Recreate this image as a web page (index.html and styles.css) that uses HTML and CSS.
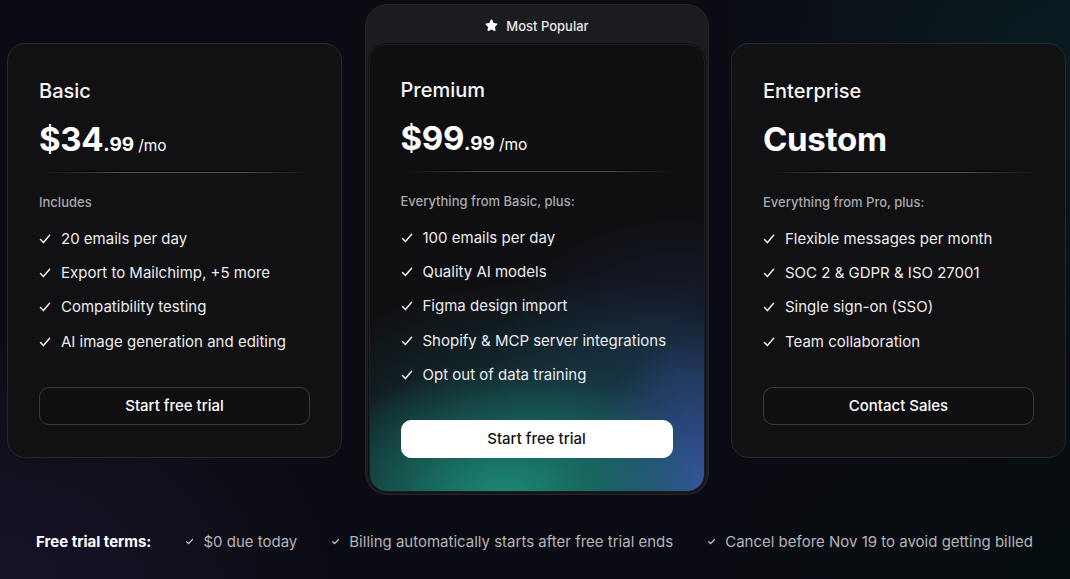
FILE: index.html
```html
<!DOCTYPE html>
<html lang="en">
<head>
<meta charset="utf-8">
<title>Pricing</title>
<link rel="stylesheet" href="styles.css">
</head>
<body>
<main class="page">
  <section class="plans">
    <article class="card">
      <h2 class="plan-name">Basic</h2>
      <div class="price"><span class="amount">$34</span><span class="cents">.99</span><span class="period">/mo</span></div>
      <div class="divider"></div>
      <p class="includes">Includes</p>
      <ul class="features">
        <li><svg class="check" viewBox="0 0 12 12"><path d="M1.5 6.6 L4.4 9.6 L10.6 2.2"/></svg>20 emails per day</li>
        <li><svg class="check" viewBox="0 0 12 12"><path d="M1.5 6.6 L4.4 9.6 L10.6 2.2"/></svg>Export to Mailchimp, +5 more</li>
        <li><svg class="check" viewBox="0 0 12 12"><path d="M1.5 6.6 L4.4 9.6 L10.6 2.2"/></svg>Compatibility testing</li>
        <li><svg class="check" viewBox="0 0 12 12"><path d="M1.5 6.6 L4.4 9.6 L10.6 2.2"/></svg>AI image generation and editing</li>
      </ul>
      <button class="btn">Start free trial</button>
    </article>

    <div class="popular">
      <div class="popular-head">
        <svg class="star" viewBox="0 0 24 24"><path d="M12 2.2c.5 0 .9.3 1.1.7l2.4 4.9 5.3.8c.9.1 1.3 1.3.6 1.9l-3.900 3.8.9 5.4c.2.9-.8 1.6-1.6 1.2L12 18.4l-4.8 2.5c-.8.4-1.8-.3-1.6-1.2l.9-5.4-3.9-3.8c-.7-.6-.3-1.8.6-1.9l5.3-.8 2.4-4.9c.2-.4.6-.7 1.1-.7z"/></svg>
        <span>Most Popular</span>
      </div>
      <article class="card card-premium">
        <h2 class="plan-name">Premium</h2>
        <div class="price"><span class="amount">$99</span><span class="cents">.99</span><span class="period">/mo</span></div>
        <div class="divider"></div>
        <p class="includes">Everything from Basic, plus:</p>
        <ul class="features">
          <li><svg class="check" viewBox="0 0 12 12"><path d="M1.5 6.6 L4.4 9.6 L10.6 2.2"/></svg>100 emails per day</li>
          <li><svg class="check" viewBox="0 0 12 12"><path d="M1.5 6.6 L4.4 9.6 L10.6 2.2"/></svg>Quality AI models</li>
          <li><svg class="check" viewBox="0 0 12 12"><path d="M1.5 6.6 L4.4 9.6 L10.6 2.2"/></svg>Figma design import</li>
          <li><svg class="check" viewBox="0 0 12 12"><path d="M1.5 6.6 L4.4 9.6 L10.6 2.2"/></svg>Shopify &amp; MCP server integrations</li>
          <li><svg class="check" viewBox="0 0 12 12"><path d="M1.5 6.6 L4.4 9.6 L10.6 2.2"/></svg>Opt out of data training</li>
        </ul>
        <button class="btn btn-primary">Start free trial</button>
      </article>
    </div>

    <article class="card">
      <h2 class="plan-name">Enterprise</h2>
      <div class="price"><span class="amount">Custom</span></div>
      <div class="divider"></div>
      <p class="includes">Everything from Pro, plus:</p>
      <ul class="features">
        <li><svg class="check" viewBox="0 0 12 12"><path d="M1.5 6.6 L4.4 9.6 L10.6 2.2"/></svg>Flexible messages per month</li>
        <li><svg class="check" viewBox="0 0 12 12"><path d="M1.5 6.6 L4.4 9.6 L10.6 2.2"/></svg>SOC 2 &amp; GDPR &amp; ISO 27001</li>
        <li><svg class="check" viewBox="0 0 12 12"><path d="M1.5 6.6 L4.4 9.6 L10.6 2.2"/></svg>Single sign-on (SSO)</li>
        <li><svg class="check" viewBox="0 0 12 12"><path d="M1.5 6.6 L4.4 9.6 L10.6 2.2"/></svg>Team collaboration</li>
      </ul>
      <button class="btn">Contact Sales</button>
    </article>
  </section>

  <footer class="terms">
    <strong class="terms-title">Free trial terms:</strong>
    <span class="term"><svg class="mini-check" viewBox="0 0 10 10"><path d="M1.8 5.2 L4 7.3 L8.3 2.8"/></svg>$0 due today</span>
    <span class="term"><svg class="mini-check" viewBox="0 0 10 10"><path d="M1.8 5.2 L4 7.3 L8.3 2.8"/></svg>Billing automatically starts after free trial ends</span>
    <span class="term"><svg class="mini-check" viewBox="0 0 10 10"><path d="M1.8 5.2 L4 7.3 L8.3 2.8"/></svg>Cancel before Nov 19 to avoid getting billed</span>
  </footer>
</main>
</body>
</html>
```

FILE: styles.css
```css
* { box-sizing: border-box; }

html, body {
  margin: 0;
  height: 100%;
}

body {
  font-family: Inter, "Noto Sans", "Liberation Sans", sans-serif;
  color: #f2f2f3;
  background:
    radial-gradient(ellipse 45% 60% at 0% 100%, rgba(28, 20, 48, 0.75), transparent 70%),
    radial-gradient(ellipse 45% 70% at 100% 10%, rgba(8, 34, 38, 0.7), transparent 75%),
    radial-gradient(ellipse 40% 50% at 100% 100%, rgba(4, 14, 16, 0.8), transparent 80%),
    #0b0c13;
  overflow: hidden;
}

.page {
  padding: 4px 0 0 7px;
}

.plans {
  display: flex;
  align-items: flex-start;
  gap: 22.5px;
}

.card {
  width: 335px;
  margin-top: 39px;
  padding: 35px 31px 32px;
  background: #111013;
  border: 1px solid #29292d;
  border-radius: 18px;
  display: flex;
  flex-direction: column;
}

.plan-name {
  margin: 0;
  font-size: 20px;
  line-height: 24px;
  font-weight: 500;
  color: #f5f5f6;
}

.price {
  margin-top: 17px;
  height: 40px;
  display: flex;
  align-items: baseline;
  color: #fff;
}

.amount {
  font-size: 33px;
  line-height: 38px;
  font-weight: 700;
  letter-spacing: -0.3px;
}

.cents {
  font-size: 19px;
  font-weight: 700;
}

.period {
  margin-left: 4px;
  font-size: 15.5px;
  font-weight: 400;
}

.divider {
  margin-top: 11px;
  height: 2px;
  background:
    linear-gradient(90deg, transparent 2%, rgba(255, 255, 255, 0.28) 30%, rgba(255, 255, 255, 0.28) 75%, transparent 100%) bottom / 100% 1px no-repeat,
    linear-gradient(90deg, transparent 5%, #000 20%, #000 80%, transparent 95%) top / 100% 1px no-repeat;
}

.includes {
  margin: 20px 0 0;
  font-size: 13px;
  line-height: 18px;
  font-weight: 500;
  color: #a9a9ad;
}

.features {
  list-style: none;
  margin: 18px 0 0;
  padding: 0;
  display: flex;
  flex-direction: column;
  gap: 14.2px;
}

.features li {
  display: flex;
  align-items: center;
  gap: 10px;
  font-size: 15px;
  line-height: 20px;
  color: #ececee;
}

.check {
  width: 12px;
  height: 12px;
  flex: none;
  fill: none;
  stroke: #f0f0f2;
  stroke-width: 1.5;
  stroke-linecap: round;
  stroke-linejoin: round;
}

.btn {
  margin-top: 35px;
  height: 38px;
  width: 100%;
  border-radius: 10px;
  border: 1px solid #3a3a3e;
  background: #0f0e11;
  color: #fff;
  font-family: inherit;
  font-size: 15px;
  font-weight: 500;
  cursor: pointer;
}

.btn-primary {
  background: #fff;
  color: #111;
  border-color: #fff;
}

.popular {
  width: 344px;
  padding: 0 3px 2px;
  background: #1b1c1f;
  border: 1px solid #222428;
  border-radius: 22px;
}

.popular-head {
  height: 39px;
  padding-top: 2px;
  display: flex;
  align-items: center;
  justify-content: center;
  gap: 7px;
  font-size: 13px;
  font-weight: 500;
  color: #e8e8ea;
}

.star {
  width: 15px;
  height: 15px;
  fill: #fff;
}

.card-premium {
  width: 100%;
  margin-top: 0;
  padding-top: 33px;
  padding-bottom: 33px;
  border-radius: 18px;
  border-color: #1d1e22;
  background:
    radial-gradient(ellipse 65% 30% at 40% 102%, rgba(28, 150, 128, 0.9), transparent 100%),
    radial-gradient(ellipse 40% 36% at 104% 100%, rgba(62, 88, 178, 0.95), transparent 100%),
    radial-gradient(ellipse 90% 36% at 60% 88%, rgba(26, 100, 112, 0.55), transparent 100%),
    radial-gradient(ellipse 55% 32% at 92% 70%, rgba(40, 60, 120, 0.4), transparent 100%),
    #0f0f12;
  box-shadow: 0 0 0 1px rgba(0, 0, 0, 0.4);
}

.terms {
  margin-top: 37px;
  padding-left: 29px;
  display: flex;
  align-items: center;
  gap: 34px;
  font-size: 15px;
  line-height: 20px;
}

.terms-title {
  font-weight: 700;
  color: #fff;
}

.term {
  display: flex;
  align-items: center;
  gap: 9px;
  color: #b4b4b8;
}

.mini-check {
  width: 9px;
  height: 9px;
  fill: none;
  stroke: #c8c8cc;
  stroke-width: 1.4;
  stroke-linecap: round;
  stroke-linejoin: round;
}
```
